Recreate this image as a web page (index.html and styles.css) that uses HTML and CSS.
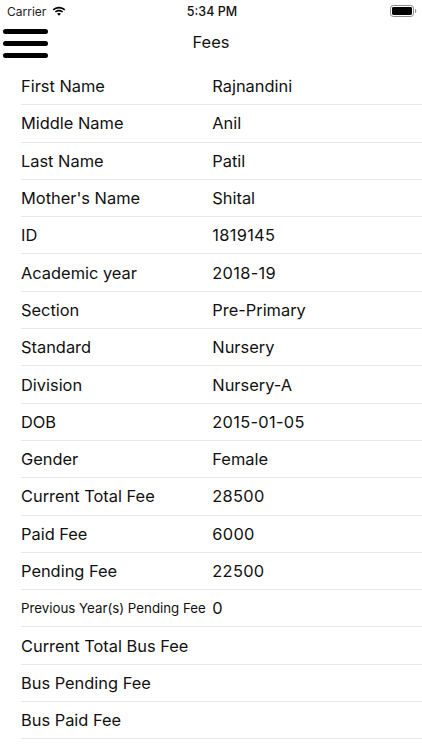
FILE: index.html
```html
<!DOCTYPE html>
<html lang="en">
<head>
<meta charset="utf-8">
<title>Fees</title>
<link rel="stylesheet" href="styles.css">
</head>
<body>
<div class="status">
  <div class="status-left">
    <span class="carrier">Carrier</span>
    <svg class="wifi" viewBox="0 0 15 11" width="15" height="11"><path d="M7.5 2.2c2.2 0 4.1.8 5.6 2.2l1.1-1.2C12.4 1.4 10.100.400 7.500.400S2.600 1.400.800 3.200l1.100 1.200C3.400 3 5.300 2.200 7.500 2.200zM7.500 5.400c1.300 0 2.400.500 3.300 1.300l1.100-1.200C10.700 4.400 9.200 3.700 7.500 3.700s-3.200.700-4.400 1.800l1.100 1.200c.900-.800 2-1.300 3.300-1.300zM7.500 7c-.800 0-1.500.300-2.100.800l2.100 2.300 2.100-2.300C9 7.300 8.300 7 7.500 7z"/></svg>
  </div>
  <span class="time">5:34 PM</span>
  <div class="status-right">
    <svg class="battery" viewBox="0 0 27 12" width="27" height="12"><rect x=".5" y=".5" width="23" height="11" rx="2.800" fill="none" stroke="#8a8a8a"/><rect x="2" y="2" width="20" height="8" rx="1.400"/><path d="M25 4v4c.8-.3 1.300-1 1.300-2s-.5-1.700-1.300-2z" fill="#8a8a8a"/></svg>
  </div>
</div>
<header class="nav">
  <button class="menu" aria-label="Menu"><span></span><span></span><span></span></button>
  <h1 class="title">Fees</h1>
</header>
<main class="list">
  <div class="row"><span class="label">First Name</span><span class="value">Rajnandini</span></div>
  <div class="row"><span class="label">Middle Name</span><span class="value">Anil</span></div>
  <div class="row"><span class="label">Last Name</span><span class="value">Patil</span></div>
  <div class="row"><span class="label">Mother's Name</span><span class="value">Shital</span></div>
  <div class="row"><span class="label">ID</span><span class="value num">1819145</span></div>
  <div class="row"><span class="label">Academic year</span><span class="value num">2018-19</span></div>
  <div class="row"><span class="label">Section</span><span class="value">Pre-Primary</span></div>
  <div class="row"><span class="label">Standard</span><span class="value">Nursery</span></div>
  <div class="row"><span class="label">Division</span><span class="value">Nursery-A</span></div>
  <div class="row"><span class="label">DOB</span><span class="value num">2015-01-05</span></div>
  <div class="row"><span class="label">Gender</span><span class="value">Female</span></div>
  <div class="row"><span class="label">Current Total Fee</span><span class="value num">28500</span></div>
  <div class="row"><span class="label">Paid Fee</span><span class="value num">6000</span></div>
  <div class="row"><span class="label">Pending Fee</span><span class="value num">22500</span></div>
  <div class="row"><span class="label small">Previous Year(s) Pending Fee</span><span class="value num">0</span></div>
  <div class="row"><span class="label">Current Total Bus Fee</span><span class="value"></span></div>
  <div class="row"><span class="label">Bus Pending Fee</span><span class="value"></span></div>
  <div class="row"><span class="label">Bus Paid Fee</span><span class="value"></span></div>
</main>
</body>
</html>
```
FILE: styles.css
```css
* { box-sizing: border-box; }
html, body { margin: 0; padding: 0; }
body {
  width: 422px;
  height: 750px;
  overflow: hidden;
  background: #fff;
  color: #111;
  font-family: Inter, "Liberation Sans", sans-serif;
}
.status {
  height: 22px;
  padding: 0 5px 0 7px;
  display: grid;
  grid-template-columns: 1fr auto 1fr;
  align-items: center;
  font-size: 12px;
}
.status-left { display: flex; align-items: center; gap: 6px; }
.carrier { color: #222; }
.time { font-weight: 500; font-size: 12.500px; }
.status-right { display: flex; justify-content: flex-end; }
.wifi, .battery { display: block; }
.wifi { width: 14px; height: 11px; }
.nav {
  height: 45px;
  display: flex;
  align-items: center;
  justify-content: center;
  position: relative;
}
.menu {
  position: absolute;
  left: 3px;
  top: 7px;
  width: 45px;
  height: 29px;
  padding: 0;
  border: 0;
  background: none;
  display: flex;
  flex-direction: column;
  justify-content: space-between;
}
.menu span {
  display: block;
  height: 5px;
  border-radius: 3px;
  background: #000;
}
.title {
  margin: 0 0 6px;
  font-size: 16.400px;
  font-weight: 400;
}
.list { margin-left: 21px; padding-top: 1px; }
.row {
  height: 37.300px;
  display: flex;
  align-items: center;
  border-bottom: 1px solid #e8e8e8;
  font-size: 16.400px;
}
.label { width: 191.300px; flex: none; white-space: nowrap; }
.label.small { font-size: 13.300px; }
.num { letter-spacing: .3px; }
```
